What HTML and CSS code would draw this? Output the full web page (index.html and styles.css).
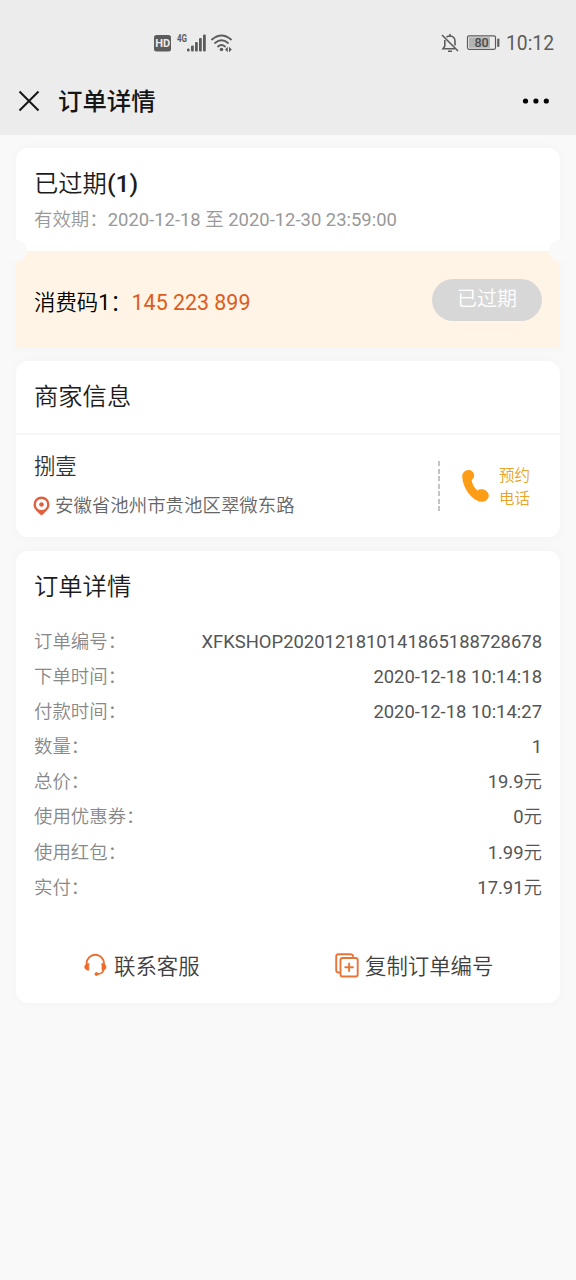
FILE: index.html
```html
<!DOCTYPE html>
<html lang="zh-CN">
<head>
<meta charset="utf-8">
<title>订单详情</title>
<link rel="stylesheet" href="styles.css">
</head>
<body>
<header class="top">
  <div class="status">
    <svg class="signals" width="80" height="24" viewBox="0 0 80 24" fill="#5c5c5c">
      <rect x="1" y="4" width="17" height="16.500" rx="2.500"/>
      <text x="9.600" y="16.200" class="hd">HD</text>
      <text x="24" y="11" class="net">4G</text>
      <rect x="34" y="17.500" width="2.600" height="3" rx="1"/>
      <rect x="38" y="14.500" width="2.800" height="6" rx="1"/>
      <rect x="42" y="11" width="2.800" height="9.500" rx="1"/>
      <rect x="46" y="7" width="2.800" height="13.500" rx="1"/>
      <rect x="50" y="3.500" width="2.800" height="17" rx="1"/>
      <g fill="none" stroke="#5c5c5c" stroke-width="1.900" stroke-linecap="round">
        <path d="M59 8.500Q68.500 0.500 78 8.500"/>
        <path d="M62 12Q68.500 6.500 75 12"/>
        <path d="M65 15.500Q68.500 12.500 72 15.500"/>
      </g>
      <circle cx="68.500" cy="18.500" r="1.800"/>
      <path d="M74.800 15.800v5.400L72 18.500zM76 15.800v5.400l2.800-2.700z"/>
    </svg>
    <div class="status-right">
      <svg width="18" height="20" viewBox="0 0 18 20" fill="none" stroke="#5c5c5c" stroke-width="1.600">
        <path d="M5.500 4.200Q7 3 9 3Q14 3.200 14 8.500V12.500M3.800 7V13.200L2 15.800H14M9 1V3M7 18.200H11M1 2L17 18"/>
      </svg>
      <svg width="34" height="18" viewBox="0 0 34 18">
        <rect x="1.500" y="1.800" width="28" height="13.500" rx="1.500" fill="none" stroke="#5c5c5c" stroke-width="1.200"/>
        <rect x="3" y="3.300" width="21" height="10.500" fill="#b3b3b3"/>
        <rect x="31.200" y="4.500" width="2.200" height="8.500" rx="1" fill="#5c5c5c"/>
        <text x="15.500" y="13" class="battery">80</text>
      </svg>
      <span class="clock">10:12</span>
    </div>
  </div>
  <div class="nav">
    <svg width="22" height="22" viewBox="0 0 22 22" stroke="#161616" stroke-width="2"><path d="M1.500 1.500L20.500 20.500M20.500 1.500L1.500 20.500"/></svg>
    <h1 class="nav-title">订单详情</h1>
    <svg class="more" width="28" height="6" viewBox="0 0 28 6"><circle cx="3.500" cy="3" r="2.600"/><circle cx="13.900" cy="3" r="2.600"/><circle cx="24.300" cy="3" r="2.600"/></svg>
  </div>
</header>
<main class="page">
  <section class="ticket">
    <div class="ticket-head">
      <h2 class="title">已过期<b class="count">(1)</b></h2>
      <p class="valid">有效期：2020-12-18 至 2020-12-30 23:59:00</p>
    </div>
    <div class="coupon">
      <span class="code-label">消费码1：</span><span class="code">145 223 899</span>
      <span class="pill">已过期</span>
    </div>
  </section>
  <section class="card">
    <h2 class="title card-title">商家信息</h2>
    <div class="shop">
      <div class="shop-info">
        <p class="shop-name">捌壹</p>
        <p class="address">
          <svg width="17" height="20" viewBox="0 0 17 20"><path d="M8.500 0.500A8 8 0 0 1 16.500 8.500C16.500 13 12.500 16 8.500 19.500C4.500 16 0.500 13 0.500 8.500A8 8 0 0 1 8.500 0.500Z" fill="#e0603f"/><circle cx="8.500" cy="8.500" r="5.600" fill="#fff"/><circle cx="8.500" cy="8.500" r="2.300" fill="#e0603f"/></svg>
          <span>安徽省池州市贵池区翠微东路</span>
        </p>
      </div>
      <div class="call">
        <svg width="28" height="34" viewBox="0 0 28 34"><path d="M1.800 3.200C4 0.700 8.500 0 11 3.200C13 5.900 12.200 9 9.600 10.700C10.100 15 12.200 18.700 15.500 21.600C17.500 19.800 21.500 19.600 24 21.700C27.500 24.300 27.600 28 25 30.700C21.500 34.200 15.500 32.800 11 29C5 23.900 1 16.300 0.300 8.500C0.100 6.200 0.500 4.500 1.800 3.200Z" fill="#fd9c17"/></svg>
        <span class="call-text">预约<br>电话</span>
      </div>
    </div>
  </section>
  <section class="card">
    <h2 class="title order-title">订单详情</h2>
    <dl class="rows">
      <div class="row"><dt>订单编号：</dt><dd>XFKSHOP2020121810141865188728678</dd></div>
      <div class="row"><dt>下单时间：</dt><dd>2020-12-18 10:14:18</dd></div>
      <div class="row"><dt>付款时间：</dt><dd>2020-12-18 10:14:27</dd></div>
      <div class="row"><dt>数量：</dt><dd>1</dd></div>
      <div class="row"><dt>总价：</dt><dd>19.9元</dd></div>
      <div class="row"><dt>使用优惠券：</dt><dd>0元</dd></div>
      <div class="row"><dt>使用红包：</dt><dd>1.99元</dd></div>
      <div class="row"><dt>实付：</dt><dd>17.91元</dd></div>
    </dl>
    <div class="actions">
      <div class="action service">
        <svg width="23" height="24" viewBox="0 0 23 24" fill="none" stroke="#f06a2a" stroke-linecap="round"><path d="M2.600 12V10.500A8.700 8.700 0 0 1 20 10.500V12" stroke-width="1.900"/><path d="M4.800 10.800V17.200C2 17.200 0.800 15.800 0.800 14C0.800 12.200 2 10.800 4.800 10.800ZM18 10.800V17.200C20.800 17.200 22 15.800 22 14C22 12.200 20.800 10.800 18 10.800Z" fill="#f06a2a" stroke-width="0.800"/><path d="M19.800 16Q19.500 20.500 13.500 21.200" stroke-width="1.700"/><circle cx="12.500" cy="21" r="1.500" fill="#f06a2a"/></svg>
        <span>联系客服</span>
      </div>
      <div class="action copy">
        <svg width="24" height="25" viewBox="0 0 24 25" fill="none" stroke="#e87538" stroke-width="1.900" stroke-linecap="round"><path d="M5 19.500H3.500Q1.200 19.500 1.200 17V3.500Q1.200 1.200 3.500 1.200H15.500Q17.800 1.200 18 3.200"/><rect x="5.500" y="5" width="17.200" height="18.500" rx="2"/><path d="M14.100 10.500V18M10.300 14.250H17.900"/></svg>
        <span>复制订单编号</span>
      </div>
    </div>
  </section>
</main>
</body>
</html>
```
FILE: styles.css
```css
* { box-sizing: border-box; }
body {
  margin: 0;
  min-height: 1280px;
  background: #f9f9f9;
  color: #1c1c1c;
  font-family: Roboto, "Noto Sans CJK SC DemiLight", "Noto Sans CJK SC Light", "Noto Sans CJK SC", sans-serif;
}
h1, h2, p, dl, dd { margin: 0; font-weight: 400; }
svg { display: block; flex: none; }

.top { height: 135px; background: #ececec; }
.status {
  display: flex;
  justify-content: space-between;
  align-items: center;
  height: 67px;
  padding: 19px 22px 0 153px;
}
.status-right { display: flex; align-items: center; color: #5c5c5c; }
.status-right svg { margin-left: 1px; }
.status-right svg + svg { margin-left: 7px; }
.clock { margin-left: 6px; padding-top: 2px; font-size: 19.300px; line-height: 24px; }
.hd { font: 700 11px Roboto, sans-serif; fill: #ececec; text-anchor: middle; }
.net { font: 700 10px Roboto, sans-serif; }
.net { transform: scaleX(.8); transform-origin: 24px 0; }
.battery { font: 500 12.500px Roboto, sans-serif; fill: #4c4c4c; text-anchor: middle; }
.nav { display: flex; align-items: center; height: 68px; padding: 0 26px 0 18px; }
.nav-title {
  margin-left: 18px;
  padding-top: 2px;
  font-family: Roboto, "Noto Sans CJK SC", sans-serif;
  font-size: 24.400px;
  line-height: 36px;
  font-weight: 500;
  color: #161616;
}
.more { margin-left: auto; }

.page { padding: 13px 16px 0; }
.ticket { position: relative; box-shadow: 0 0 12px rgba(0, 0, 0, .03); border-radius: 12px 12px 0 0; }
.ticket::before,
.ticket::after {
  content: "";
  position: absolute;
  top: 91px;
  width: 24px;
  height: 23px;
  border-radius: 50%;
  background: #f9f9f9;
}
.ticket::before { left: -13px; }
.ticket::after { right: -13px; }
.ticket-head { height: 103px; padding: 18px 18px 0; background: #fff; border-radius: 12px 12px 0 0; }
.title { font-size: 24.300px; line-height: 36px; }
.count { font-weight: 500; font-size: 24.800px; }
.valid { margin-top: 5px; font-size: 18.430px; line-height: 26px; color: #999; }
.coupon {
  display: flex;
  align-items: center;
  height: 97px;
  padding: 0 18px;
  background: #fff4e5;
  color: #000;
  font-size: 21.400px;
}
.code-label { padding-top: 2px; }
.code { padding-top: 5px; color: #dc5d1e; }
.pill {
  width: 110px;
  height: 42px;
  margin: 0 0 0 auto;
  border-radius: 21px;
  background: #d7d7d7;
  color: #fff;
  font-size: 20px;
  line-height: 40px;
  text-align: center;
}

.card {
  margin-top: 13px;
  background: #fff;
  border-radius: 12px;
  box-shadow: 0 0 12px rgba(0, 0, 0, .03);
}
.card + .card { margin-top: 14px; }
.card-title { height: 74px; padding: 18px 18px 0; border-bottom: 2px solid #f5f5f5; }
.shop { display: flex; align-items: center; height: 102px; padding-left: 18px; }
.shop-info { flex: 1; padding-bottom: 2px; }
.shop-name { font-size: 21.300px; line-height: 32px; color: #333; }
.address { display: flex; align-items: center; gap: 5px; margin: 9px 0 0 -1px; font-size: 18.450px; line-height: 28px; color: #666; }
.call {
  display: flex;
  align-items: center;
  width: 122px;
  height: 50px;
  padding-left: 24px;
  background: repeating-linear-gradient(#c4c4c4 0 5px, transparent 5px 7.500px) left / 2px 100% no-repeat;
}
.call-text { margin-left: 9px; padding-top: 4px; color: #e8a328; font-size: 15.500px; line-height: 23px; }

.order-title { padding: 18px 18px 0; }
.rows { padding: 18.500px 18px 0; font-size: 18.430px; }
.row { display: flex; justify-content: space-between; height: 35.200px; line-height: 35.200px; }
.row dt { color: #888; }
.row dd { color: #555; }
.actions { display: flex; height: 97.500px; padding-top: 43.500px; font-size: 21.400px; line-height: 36px; color: #404040; }
.action { display: flex; align-items: center; height: 36px; }
.action svg { margin-top: -3px; }
.service { width: 319px; padding-left: 68px; gap: 7px; }
.copy { gap: 6px; }
```
